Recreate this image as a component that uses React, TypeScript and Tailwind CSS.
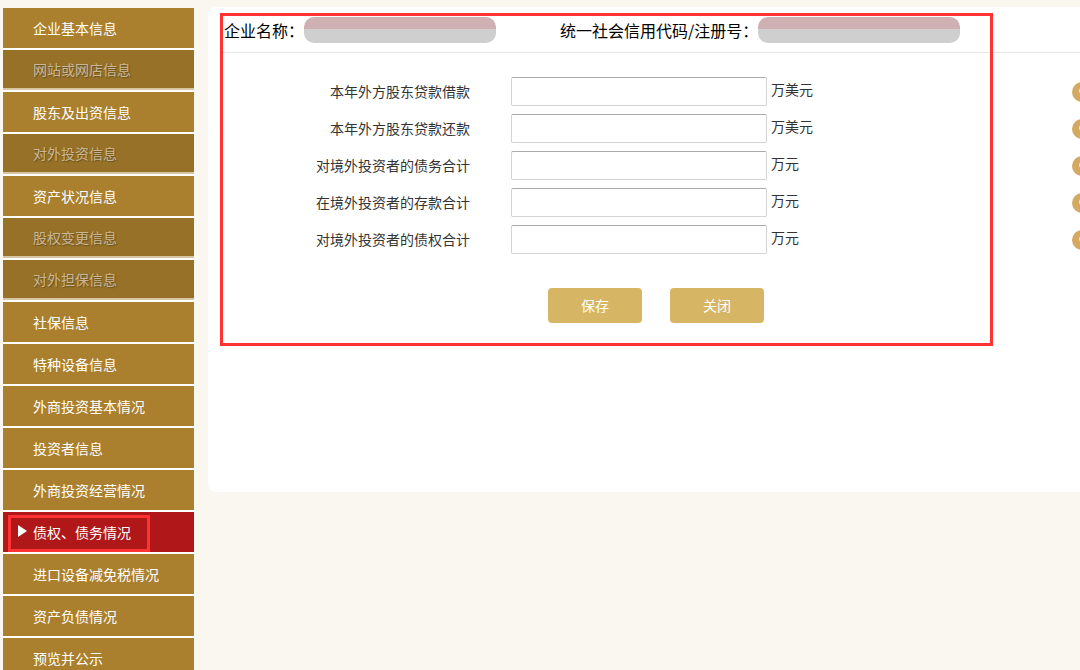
import React from "react";

const FONT = '"Microsoft YaHei", "Noto Sans CJK SC", "Noto Sans", sans-serif';

type Item = { label: string; disabled?: boolean; active?: boolean };

const items: Item[] = [
  { label: "企业基本信息" },
  { label: "网站或网店信息", disabled: true },
  { label: "股东及出资信息" },
  { label: "对外投资信息", disabled: true },
  { label: "资产状况信息" },
  { label: "股权变更信息", disabled: true },
  { label: "对外担保信息", disabled: true },
  { label: "社保信息" },
  { label: "特种设备信息" },
  { label: "外商投资基本情况" },
  { label: "投资者信息" },
  { label: "外商投资经营情况" },
  { label: "债权、债务情况", active: true },
  { label: "进口设备减免税情况" },
  { label: "资产负债情况" },
  { label: "预览并公示" },
];

const rows = [
  { label: "本年外方股东贷款借款", unit: "万美元" },
  { label: "本年外方股东贷款还款", unit: "万美元" },
  { label: "对境外投资者的债务合计", unit: "万元" },
  { label: "在境外投资者的存款合计", unit: "万元" },
  { label: "对境外投资者的债权合计", unit: "万元" },
];

function Blur({ w }: { w: number }) {
  return (
    <div
      className="flex flex-col h-[26px] rounded-[10px] overflow-hidden blur-[0.6px]"
      style={{ width: w }}
    >
      <div className="h-[12px] bg-[#cfb1b3]" />
      <div className="flex-1 bg-[#cfcfcf]" />
    </div>
  );
}

export default function App() {
  return (
    <div
      className="w-[1080px] h-[670px] bg-[#faf7f0] flex overflow-hidden pl-[3px] pt-[8px]"
      style={{ fontFamily: FONT }}
    >
      {/* Sidebar */}
      <div className="w-[191px] shrink-0 flex flex-col gap-[2px] bg-white self-start">
        {items.map((it) => (
          <div
            key={it.label}
            className={
              "relative h-[40px] shrink-0 flex items-center pl-[30px] text-[14px] " +
              (it.active
                ? "bg-[#b01719] text-white"
                : it.disabled
                ? "bg-[#967127] text-[#c9b898] [text-shadow:1px_1px_1px_rgba(80,60,20,0.6)] border-b-2 border-[#d6c6a2]"
                : "bg-[#aa802e] text-white")
            }
          >
            {it.active && (
              <>
                <span className="absolute left-[15px] top-[13px] w-0 h-0 border-y-[6px] border-y-transparent border-l-[9px] border-l-white" />
                <span className="absolute left-[5px] top-[3px] w-[142px] h-[37px] border-[3px] border-[#ff3333]" />
              </>
            )}
            <span className="relative">{it.label}</span>
          </div>
        ))}
      </div>

      {/* Main panel */}
      <div className="ml-[14px] mt-[-1px] w-[900px] shrink-0 h-[485px] bg-white rounded-l-[8px] relative">
        {/* Header */}
        <div className="h-[46px] ml-[14px] flex items-center border-b border-[#e6e6e6] text-[16px] text-black">
          <div className="flex items-center pl-[2px] w-[338px]">
            <span>企业名称：</span>
            <Blur w={192} />
          </div>
          <div className="flex items-center">
            <span>统一社会信用代码/注册号：</span>
            <Blur w={202} />
          </div>
        </div>

        {/* Form */}
        <div className="pt-[24px] flex flex-col gap-[8px]">
          {rows.map((r) => (
            <div key={r.label} className="flex items-center h-[29px]">
              <div className="w-[262px] text-right text-[14px] text-[#333]">{r.label}</div>
              <div className="ml-[41px] w-[256px] h-[29px] border border-[#d3d3d3] border-t-[#aaaaaa] rounded-[2px] bg-white" />
              <div className="ml-[4px] w-[301px] self-start text-[14px] text-[#333] leading-[24px]">{r.unit}</div>
              <div className="w-[20px] h-[20px] rounded-full bg-[#d4aa62] relative">
                <span className="absolute left-[7px] top-[6px] w-[6px] h-[6px] rounded-full bg-white/70" />
              </div>
            </div>
          ))}
        </div>

        <div className="flex mt-[34px] ml-[340px] gap-[28px]">
          <button className="w-[94px] h-[35px] rounded-[4px] bg-[#d6b664] text-white text-[14px]">保存</button>
          <button className="w-[94px] h-[35px] rounded-[4px] bg-[#d6b664] text-white text-[14px]">关闭</button>
        </div>

        {/* Annotation rectangle */}
        <div className="absolute left-[12px] top-[6px] w-[773px] h-[333px] border-[3px] border-[#ff3333] pointer-events-none" />
      </div>
    </div>
  );
}
